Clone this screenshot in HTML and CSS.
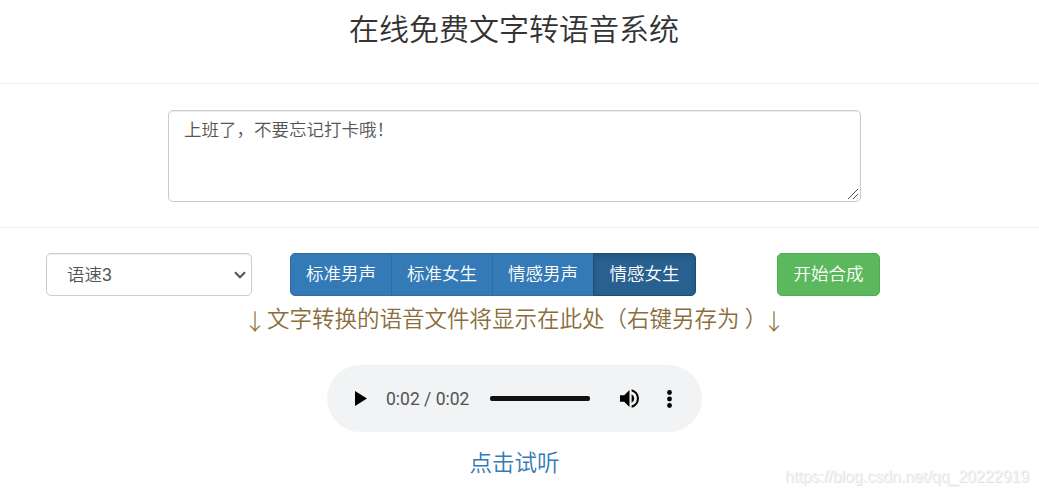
FILE: index.html
```html
<!DOCTYPE html>
<html lang="zh-CN">
<head>
  <meta charset="UTF-8">
  <title>在线免费文字转语音系统</title>
  <link rel="stylesheet" href="styles.css">
</head>
<body>

  <header>
    <h1>在线免费文字转语音系统</h1>
  </header>

  <!-- TEXT INPUT -->
  <section class="text-section">
    <div class="text-box">
      <textarea class="form-control" id="text" spellcheck="false">上班了，不要忘记打卡哦！</textarea>
      <svg class="grip" viewBox="0 0 12 12"><path d="M1 11 11 1M6 11l5-5" /></svg>
    </div>
  </section>

  <!-- OPTIONS -->
  <section class="options">
    <div class="select-box">
      <select class="form-control" id="speed">
        <option>语速3</option>
      </select>
      <svg class="chevron" viewBox="0 0 12 8"><path d="M1 1.3 6 6.2l5-4.9" /></svg>
    </div>
    <div class="btn-group">
      <button class="btn">标准男声</button>
      <button class="btn">标准女生</button>
      <button class="btn">情感男声</button>
      <button class="btn active">情感女生</button>
    </div>
    <button class="btn btn-success">开始合成</button>
  </section>

  <!-- RESULT -->
  <section class="result">
    <p class="hint"><span class="arrow">↓</span><span>文字转换的语音文件将显示在此处（右键另存为<span class="close">）</span></span><span class="arrow">↓</span></p>
    <div class="player">
      <svg class="play" viewBox="0 0 12 15"><path d="M0 0v15l12-7.5z" /></svg>
      <span class="time">0:02 / 0:02</span>
      <div class="track"></div>
      <svg class="volume" viewBox="3 3 18 18"><path d="M3 9v6h4l5 5V4L7 9H3zm13.5 3A4.5 4.5 0 0 0 14 7.97v8.05A4.5 4.5 0 0 0 16.5 12zM14 3.23v2.06a7 7 0 0 1 0 13.42v2.06a9 9 0 0 0 0-17.54z" /></svg>
      <svg class="more" viewBox="0 0 5 18"><circle cx="2.5" cy="2.5" r="2.4" /><circle cx="2.5" cy="9" r="2.4" /><circle cx="2.5" cy="15.5" r="2.4" /></svg>
    </div>
    <a class="listen" href="#">点击试听</a>
  </section>

  <div class="watermark">https://blog.csdn.net/qq_20222919</div>

</body>
</html>
```

FILE: styles.css
```css
* {
  box-sizing: border-box;
}

body {
  margin: 0;
  height: 495px;
  overflow: hidden;
  position: relative;
  font-family: 'Liberation Sans', 'Noto Sans CJK SC', sans-serif;
  font-weight: 350;
  font-size: 17.5px;
  color: #333;
  background: #fff;
}

header {
  height: 84px;
  padding: 13px 11px 0 0;
  border-bottom: 1px solid #eee;
  text-align: center;
}

h1 {
  margin: 0;
  font-size: 30px;
  line-height: 33px;
  font-weight: 350;
}

/* Text input */
.text-section {
  height: 144px;
  padding: 26px 10px 0 0;
  border-bottom: 1px solid #eee;
}

.text-box {
  position: relative;
  width: 693px;
  height: 92px;
  margin: 0 auto;
}

.form-control {
  display: block;
  width: 100%;
  height: 100%;
  margin: 0;
  border: 1px solid #ccc;
  border-radius: 5px;
  background: #fff;
  box-shadow: inset 0 1px 1px rgba(0, 0, 0, 0.075);
  font: inherit;
  color: #555;
  outline: none;
}

textarea.form-control {
  padding: 7px 15px;
  line-height: 25px;
  resize: none;
}

.grip {
  position: absolute;
  right: 2px;
  bottom: 2px;
  width: 12px;
  height: 12px;
  fill: none;
  stroke: #555;
}

/* Options */
.options {
  display: flex;
  padding: 25px 0 0 46px;
}

.select-box {
  position: relative;
  width: 206px;
  height: 43px;
  margin-right: 38px;
}

select.form-control {
  appearance: none;
  padding: 0 20px;
}

.chevron {
  position: absolute;
  right: 6px;
  top: 18px;
  width: 12px;
  height: 8px;
  fill: none;
  stroke: #555;
  stroke-width: 2.2;
}

.btn-group {
  display: flex;
  margin-right: 81px;
}

.btn {
  height: 43px;
  width: 102px;
  padding: 0 0 4px;
  border: 1px solid #2e6da4;
  background: #337ab7;
  font: inherit;
  color: #fff;
}

.btn-group .btn + .btn {
  margin-left: -1px;
}

.btn-group .btn:first-child {
  border-radius: 5px 0 0 5px;
}

.btn-group .btn:last-child {
  width: 103px;
  border-radius: 0 5px 5px 0;
}

.btn.active {
  background: #286090;
  border-color: #204d74;
  box-shadow: inset 0 3px 5px rgba(0, 0, 0, 0.125);
}

.btn-success {
  width: 103px;
  background: #5cb85c;
  border-color: #4cae4c;
  border-radius: 5px;
}

/* Result */
.result {
  display: flex;
  flex-direction: column;
  align-items: center;
  padding-right: 10px;
  font-size: 22.5px;
}

.hint {
  display: flex;
  justify-content: center;
  margin: 8px 0 0;
  line-height: 32px;
  color: #8a6d3b;
  white-space: nowrap;
}

.arrow {
  width: 24px;
  text-align: center;
  font-family: 'Noto Sans CJK SC', sans-serif;
  font-weight: 300;
}

/* half-width bracket, centred in a full-width cell */
.close {
  margin: 0 6px 0 5px;
  font-feature-settings: 'halt';
}

.player {
  display: flex;
  align-items: center;
  width: 375px;
  height: 67px;
  margin-top: 29px;
  padding-left: 28px;
  border-radius: 34px;
  background: #f1f3f4;
}

.play {
  width: 12px;
  height: 15px;
}

.time {
  width: 104px;
  padding-left: 19px;
  font-family: Roboto, sans-serif;
  font-weight: 400;
  font-size: 17.5px;
  color: #505254;
  white-space: nowrap;
}

.track {
  width: 100px;
  height: 5px;
  margin: 0 30px 0 19px;
  border-radius: 2px;
  background: #111;
}

.volume {
  width: 19px;
  height: 19px;
  margin-right: 28px;
}

.more {
  width: 5px;
  height: 18px;
}

.listen {
  margin-top: 16px;
  line-height: 32px;
  color: #337ab7;
  text-decoration: none;
}

.watermark {
  position: absolute;
  right: 10px;
  bottom: 8px;
  font-size: 16px;
  line-height: 20px;
  letter-spacing: -0.04px;
  color: #f4f4f4;
  text-shadow: 1px 1px 0 #e2e2e2;
}
```
